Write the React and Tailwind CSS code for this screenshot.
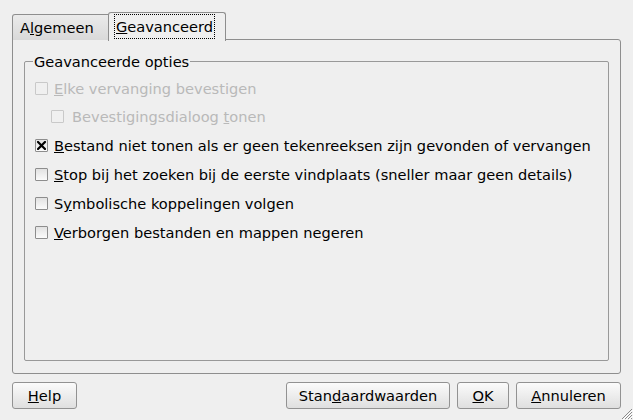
import React from 'react';

function Box({ checked, disabled }) {
  return (
    <span
      className={`inline-flex items-center justify-center w-[13px] h-[13px] shrink-0 rounded-[1px] border ${
        disabled ? 'border-[#c9c9c9] bg-[#f0f0f0]' : 'border-[#8d8d8d] bg-gradient-to-b from-[#e2e2e2] to-[#fbfbfb]'
      }`}
    >
      {checked && (
        <svg width="9" height="9" viewBox="0 0 9 9">
          <path d="M1 1 L8 8 M8 1 L1 8" stroke="#000" strokeWidth="2.2" strokeLinecap="square" />
        </svg>
      )}
    </span>
  );
}

function Row({ h = 'h-[29px]', indent, checked, disabled, children }) {
  return (
    <div className={`flex items-center ${h} ${indent ? 'pl-[26px] gap-[8px]' : 'pl-[10px] gap-[6px]'}`}>
      <Box checked={checked} disabled={disabled} />
      <span className={disabled ? 'text-[#b9b9b9]' : 'text-black'}>{children}</span>
    </div>
  );
}

function Btn({ w, children }) {
  return (
    <button
      className={`${w} h-[27px] rounded-[3px] border border-[#929292] bg-gradient-to-b from-[#fbfbfb] to-[#dfdfdf] flex items-center justify-center text-black`}
    >
      {children}
    </button>
  );
}

export default function App() {
  return (
    <div className="w-[633px] h-[420px] bg-[#efefef] relative overflow-hidden font-['DejaVu_Sans',sans-serif] text-[14.6px] leading-[17px] text-black">
      <div className="pt-[12px] px-[12px]">
        {/* tabs */}
        <div className="flex items-end h-[28px] relative z-10">
          <div className="w-[97px] h-[26px] border border-b-0 border-[#8e8e8e] rounded-tl-[3px] bg-gradient-to-b from-[#ebebeb] to-[#d9d9d9] flex items-center pl-[7px]">
            A<u>l</u>gemeen
          </div>
          <div className="-ml-px w-[118px] h-[29px] -mb-px border border-b-0 border-[#8e8e8e] rounded-t-[3px] bg-[#efefef] flex items-start pl-[5px] pt-[1px]">
            <span className="h-[25px] px-[1px] border border-dotted border-black flex items-center">
              <u>G</u>eavanceerd
            </span>
          </div>
        </div>

        {/* panel */}
        <div className="-mt-px h-[335px] border border-[#8e8e8e] rounded-b-[3px] rounded-tr-[3px] px-[11px] pt-[13px] pb-[12px]">
          <fieldset className="h-full border border-[#999] rounded-[2px] px-0">
            <legend className="ml-[8px] px-[1px] leading-[17px]">Geavanceerde opties</legend>
            <div className="pt-[4px] flex flex-col">
              <Row h="h-[28px]" disabled>
                <u>E</u>lke vervanging bevestigen
              </Row>
              <Row indent disabled>
                Bevestigingsdialoog <u>t</u>onen
              </Row>
              <Row checked>
                <u>B</u>estand niet tonen als er geen tekenreeksen zijn gevonden of vervangen
              </Row>
              <Row>
                <u>S</u>top bij het zoeken bij de eerste vindplaats (sneller maar geen details)
              </Row>
              <Row>
                S<u>y</u>mbolische koppelingen volgen
              </Row>
              <Row>
                <u>V</u>erborgen bestanden en mappen negeren
              </Row>
            </div>
          </fieldset>
        </div>
      </div>

      {/* buttons */}
      <div className="flex items-center px-[12px] mt-[8px]">
        <Btn w="w-[65px]">
          <u>H</u>elp
        </Btn>
        <div className="flex-1" />
        <div className="flex gap-[7px]">
          <Btn w="w-[164px]">
            Stan<u>d</u>aardwaarden
          </Btn>
          <Btn w="w-[52px]">
            <u>O</u>K
          </Btn>
          <Btn w="w-[105px]">
            <u>A</u>nnuleren
          </Btn>
        </div>
      </div>

      {/* resize grip */}
      <svg className="absolute right-0 bottom-0" width="14" height="14" viewBox="0 0 14 14">
        <path d="M13 3 L3 13 M13 6 L6 13 M13 9 L9 13 M13 12 L12 13" stroke="#8a8a8a" strokeWidth="1" />
        <path d="M14 4 L4 14 M14 7 L7 14 M14 10 L10 14" stroke="#ffffff" strokeWidth="1" />
      </svg>
    </div>
  );
}
